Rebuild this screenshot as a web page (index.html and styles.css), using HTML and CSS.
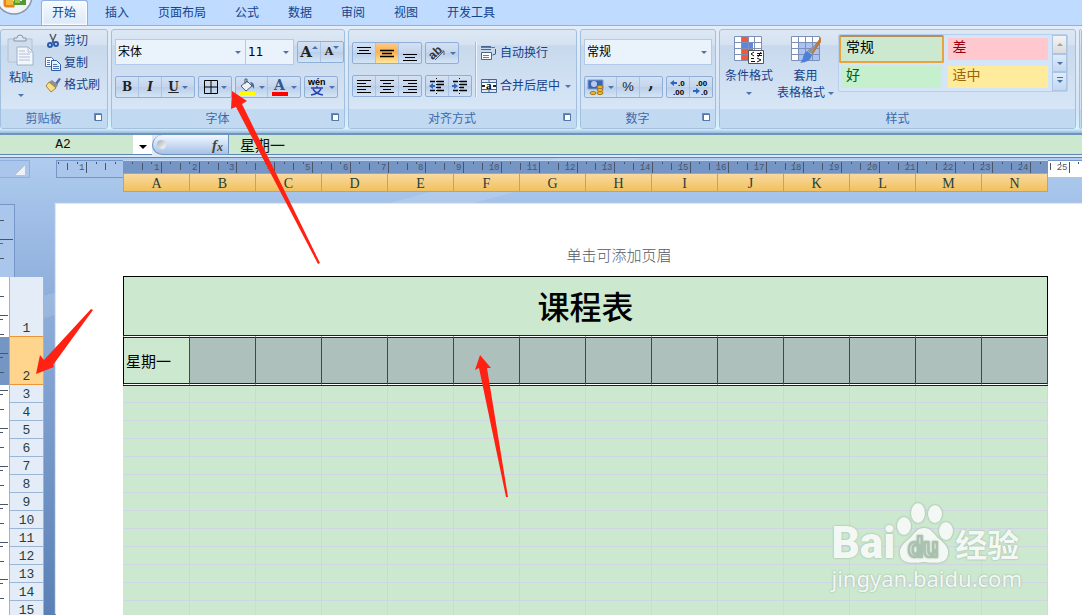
FILE: index.html
```html
<!DOCTYPE html>
<html lang="zh">
<head>
	<meta charset="UTF-8" />
	<title>课程表</title>
	<link rel="stylesheet" href="styles.css">
</head>
<body>

<!-- 选项卡 -->
<nav class="tabs">
	<button class="office" type="button" aria-label="Office">
		<svg width="34" height="16" viewBox="0 0 34 16">
			<circle cx="14" cy="-4" r="18" fill="#f2f4f7" stroke="#8796ab" stroke-width="1.5"/>
			<path d="M5 -2v6q0 2 2 2h6V1" fill="none" stroke="#e8821a" stroke-width="3"/>
			<path d="M6 0h7v5H6z" fill="#f6b73c"/>
			<path d="M16 -2v5h8v-6" fill="none" stroke="#4f9a35" stroke-width="4"/>
			<path d="M15 0h5v3h-5z" fill="#98c83f"/>
		</svg>
	</button>
	<a class="tab active" href="#">开始</a>
	<a class="tab" href="#">插入</a>
	<a class="tab" href="#">页面布局</a>
	<a class="tab" href="#">公式</a>
	<a class="tab" href="#">数据</a>
	<a class="tab" href="#">审阅</a>
	<a class="tab" href="#">视图</a>
	<a class="tab" href="#">开发工具</a>
</nav>

<!-- 功能区 -->
<div class="ribbon">
	<section class="group">
		<div class="group-body clipboard">
			<button class="big paste" type="button">
				<svg width="28" height="32" viewBox="0 0 28 32">
					<path d="M1 5h24v23H1z" fill="#cfdcec" stroke="#b0c2d8"/>
					<path d="M7 7V4h3a3 3 0 0 1 6 0h3v3z" fill="#dfe6ef" stroke="#8496ad"/>
					<path d="M10 13h11l5 5v13H10z" fill="#f3f7fc" stroke="#9db2cc"/>
					<path d="M21 13v5h5M12 17h6M12 20h11M12 23h11M12 26h11" fill="none" stroke="#aec0d8"/>
				</svg>
				<span>粘贴</span>
				<i class="arrow"></i>
			</button>
			<div class="small-list">
				<button type="button">
					<svg width="16" height="16" viewBox="0 0 16 16"><path d="M5 1l4 9M11 1L7 10" stroke="#51606f" stroke-width="1.5"/><circle cx="5" cy="12" r="2" fill="none" stroke="#2a5bb0" stroke-width="2"/><circle cx="11" cy="11" r="2" fill="none" stroke="#2a5bb0" stroke-width="2"/></svg>
					剪切
				</button>
				<button type="button">
					<svg width="16" height="16" viewBox="0 0 16 16"><path d="M.5 2.500h6l3 3v6h-9z" fill="#fff" stroke="#4d76b5"/><path d="M6.500 5.500h5l4 4v6h-9z" fill="#e9f1fc" stroke="#2e5ca6"/><path d="M2 5.500h3M2 7.500h3M2 9.500h3M8 9.500h4M8 11.500h6M8 13.500h6" stroke="#4d76b5"/></svg>
					复制
				</button>
				<button type="button">
					<svg width="16" height="16" viewBox="0 0 16 16"><path d="M10 6l4-5 2 1-4 6z" fill="#5770a8"/><path d="M7 3l6 5-2 3-7-6z" fill="#8a8f98"/><path d="M4 5l7 6-5 4-5-6z" fill="#f8e08a" stroke="#a98331"/></svg>
					格式刷
				</button>
			</div>
		</div>
		<div class="group-title"><span>剪贴板</span><i class="launcher"></i></div>
	</section>

	<section class="group">
		<div class="group-body rows">
			<div class="line">
				<button class="combo font-name" type="button">宋体<i class="arrow"></i></button>
				<button class="combo font-size" type="button">11<i class="arrow"></i></button>
				<div class="btns">
					<button class="serif grow" type="button">A<i class="arrow up"></i></button>
					<button class="serif shrink" type="button">A<i class="arrow"></i></button>
				</div>
			</div>
			<div class="line">
				<div class="btns">
					<button class="serif" type="button">B</button>
					<button class="serif italic" type="button">I</button>
					<button class="serif wide" type="button"><u>U</u><i class="arrow"></i></button>
				</div>
				<div class="btns">
					<button class="wide" type="button">
						<svg width="14" height="14" viewBox="0 0 14 14"><path d="M.5 .5h13v13H.5zM7 0v14M0 7h14" fill="none" stroke="#000"/></svg>
						<i class="arrow"></i>
					</button>
				</div>
				<div class="btns">
					<button class="wide" type="button">
						<svg width="18" height="18" viewBox="0 0 18 18"><path d="M3 8l6-5 5 5-6 5z" fill="#eef2f8" stroke="#4e5d73"/><path d="M7 6V1h2v4" fill="none" stroke="#4e5d73"/><path d="M12 4q5 0 4 7l-2-3z" fill="#3f69a8"/><path d="M1 14h16v4H1z" fill="#ff0"/></svg>
						<i class="arrow"></i>
					</button>
					<button class="wide font-color" type="button"><b>A</b><i class="arrow"></i></button>
				</div>
				<div class="btns">
					<button class="wide" type="button">
						<svg class="pinyin" width="18" height="18" viewBox="0 0 18 18"><text x="0" y="7">wén</text><path d="M3 10h12M9 8v2M5 11q3 5 10 6M13 11q-3 5-10 6" fill="none" stroke="#2a44b5" stroke-width="1.5"/></svg>
						<i class="arrow"></i>
					</button>
				</div>
			</div>
		</div>
		<div class="group-title"><span>字体</span><i class="launcher"></i></div>
	</section>

	<section class="group">
		<div class="group-body align">
			<div class="rows">
				<div class="line">
					<div class="btns">
						<button type="button" aria-label="顶端对齐"><svg width="16" height="18" viewBox="0 0 16 18"><path d="M1 3.500h14M3 6.500h10M1 9.500h14" stroke="#000"/></svg></button>
						<button class="on" type="button" aria-label="垂直居中"><svg width="16" height="18" viewBox="0 0 16 18"><path d="M1 6.500h14M3 9.500h10M1 12.500h14" stroke="#000" stroke-width="1.500"/></svg></button>
						<button type="button" aria-label="底端对齐"><svg width="16" height="18" viewBox="0 0 16 18"><path d="M1 10.500h14M3 13.500h10M1 16.500h14" stroke="#000"/></svg></button>
					</div>
					<div class="btns">
						<button class="wide" type="button">
							<svg class="orient" width="18" height="16" viewBox="0 0 18 16"><text x="0" y="12" transform="rotate(-42 6 9)">ab</text><path d="M6 15l9-9M11 6h4v4" fill="none" stroke="#56606e"/></svg>
							<i class="arrow"></i>
						</button>
					</div>
				</div>
				<div class="line">
					<div class="btns">
						<button type="button" aria-label="左对齐"><svg width="16" height="14" viewBox="0 0 16 14"><path d="M1 1.500h14M1 4.500h9M1 7.500h14M1 10.500h9M1 13.500h14" stroke="#000"/></svg></button>
						<button type="button" aria-label="居中"><svg width="16" height="14" viewBox="0 0 16 14"><path d="M1 1.500h14M4 4.500h8M1 7.500h14M4 10.500h8M1 13.500h14" stroke="#000"/></svg></button>
						<button type="button" aria-label="右对齐"><svg width="16" height="14" viewBox="0 0 16 14"><path d="M1 1.500h14M6 4.500h9M1 7.500h14M6 10.500h9M1 13.500h14" stroke="#000"/></svg></button>
					</div>
					<div class="btns">
						<button type="button" aria-label="减少缩进"><svg width="16" height="16" viewBox="0 0 16 16"><path d="M1 3.500h5M8 3.500h7M8 6.500h7M8 9.500h4M1 12.500h5M8 12.500h7" stroke="#000" stroke-width="1.500"/><path d="M7.500 0v16" stroke="#000" stroke-dasharray="1 2"/><path d="M0 8l4-3v2h2v2H4v2z" fill="#2c66c0"/></svg></button>
						<button type="button" aria-label="增加缩进"><svg width="16" height="16" viewBox="0 0 16 16"><path d="M1 3.500h5M8 3.500h7M8 6.500h7M8 9.500h4M1 12.500h5M8 12.500h7" stroke="#000" stroke-width="1.500"/><path d="M7.500 0v16" stroke="#000" stroke-dasharray="1 2"/><path d="M6 8L2 5v2H0v2h2v2z" fill="#2c66c0"/></svg></button>
					</div>
				</div>
			</div>
			<div class="small-list wrap-list">
				<button type="button">
					<svg width="16" height="16" viewBox="0 0 16 16"><path d="M0 1.500h10M0 4.500h10M.5 8v6.500h10V7.500H.5z" fill="#fff" stroke="#4b668c"/><path d="M0 2.500h14M2 10.500h6M2 12.500h6" stroke="#b0683c"/><path d="M14.500 4v5l-3 1" fill="none" stroke="#3c5a85"/></svg>
					自动换行
				</button>
				<button type="button">
					<svg class="merge" width="16" height="16" viewBox="0 0 16 16"><path d="M.5 1.500h15v13H.5z" fill="#dce8f8" stroke="#486692"/><path d="M0 4.500h16M0 11.500h16M8 1v4M8 11v4" stroke="#486692"/><path d="M1 5h14v6H1z" fill="#fff"/><text x="5" y="11">a</text><path d="M1 8h3M12 8h3" stroke="#222" stroke-width="2"/></svg>
					合并后居中<i class="arrow"></i>
				</button>
			</div>
		</div>
		<div class="group-title"><span>对齐方式</span><i class="launcher"></i></div>
	</section>

	<section class="group">
		<div class="group-body rows">
			<div class="line">
				<button class="combo number-format" type="button">常规<i class="arrow"></i></button>
			</div>
			<div class="line">
				<div class="btns">
					<button class="wide" type="button">
						<svg width="18" height="18" viewBox="0 0 18 18"><path d="M1 2h15v9H1z" fill="#3d64ac" stroke="#7d9bd0"/><circle cx="7" cy="6" r="3" fill="#b7caea"/><g fill="#f4bd2e" stroke="#a3741a"><ellipse cx="13" cy="15" rx="3" ry="1.500"/><ellipse cx="13" cy="12" rx="3" ry="1.500"/><ellipse cx="13" cy="9" rx="3" ry="1.500"/><ellipse cx="6" cy="15" rx="3" ry="1.500"/></g></svg>
						<i class="arrow"></i>
					</button>
					<button class="percent" type="button">%</button>
					<button class="serif comma" type="button">,</button>
				</div>
				<div class="btns push">
					<button type="button"><svg class="decimal" width="18" height="18" viewBox="0 0 18 18"><text x="9" y="8">.0</text><text x="4" y="17">.00</text><path d="M1 5l4-3v2h3v2H5v2z" fill="#2c66c0"/></svg></button>
					<button type="button"><svg class="decimal" width="18" height="18" viewBox="0 0 18 18"><text x="4" y="8">.00</text><text x="9" y="17">.0</text><path d="M8 13l-4-3v2H1v2h3v2z" fill="#2c66c0"/></svg></button>
				</div>
			</div>
		</div>
		<div class="group-title"><span>数字</span><i class="launcher"></i></div>
	</section>

	<section class="group">
		<div class="group-body styles">
			<button class="big" type="button">
				<svg width="32" height="30" viewBox="0 0 32 30">
					<path d="M1.500 2.500h27v24h-27z" fill="#fff"/>
					<path d="M8 2h7v6H8zM8 14h12v6H8zM8 20h7v7H8z" fill="#ef5a3c"/><path d="M8 8h12v6H8z" fill="#5b87e0"/>
					<path d="M1.500 2.500h27v24h-27zM1 8.500h28M1 14.500h28M1 20.500h28M8.500 2v25M15.500 2v25M21.500 2v25" fill="none" stroke="#7d90b8"/>
					<path d="M15.500 16.500h15v13h-15z" fill="#fff" stroke="#555"/>
					<path d="M21 18l-3 2 3 2M18 24.500h3M24 19.500h5M24 21.500h5M28 18l-3 5M18 27.500h4M24 24l4 2-4 2" fill="none" stroke="#111"/>
				</svg>
				<span>条件格式</span>
				<i class="arrow"></i>
			</button>
			<button class="big" type="button">
				<svg width="32" height="30" viewBox="0 0 32 30">
					<path d="M1.500 2.500h28v24h-28z" fill="#fff"/><path d="M8 8h21v19H8z" fill="#a9c4f3"/>
					<path d="M1.500 2.500h28v24h-28zM1 8.500h28M1 14.500h28M1 20.500h28M8.500 2v25M15.500 2v25M22.500 2v25" fill="none" stroke="#7d90b8"/>
					<path d="M31 3v5l-8 12-4-2z" fill="#b77a3c"/><path d="M27 9l-5 10-5-2z" fill="#8e939d"/><path d="M17 17l5 4c-2 6-5 7-12 8 4-3 2-9 7-12z" fill="#4c7fd6"/>
				</svg>
				<span>套用</span>
				<span class="second">表格格式<i class="arrow"></i></span>
			</button>
			<div class="gallery">
				<button class="style-cell normal" type="button">常规</button>
				<button class="style-cell bad" type="button">差</button>
				<button class="style-cell good" type="button">好</button>
				<button class="style-cell neutral" type="button">适中</button>
				<div class="gallery-scroll">
					<button type="button" aria-label="上一行"><i class="arrow up gray"></i></button>
					<button type="button" aria-label="下一行"><i class="arrow"></i></button>
					<button type="button" aria-label="其他"><i class="arrow more"></i></button>
				</div>
			</div>
		</div>
		<div class="group-title"><span>样式</span></div>
	</section>

	<section class="group">
		<div class="group-body"></div>
		<div class="group-title"></div>
	</section>
</div>

<!-- 编辑栏 -->
<div class="formula-bar">
	<input class="name-box" type="text" value="A2" aria-label="名称框">
	<button class="name-drop" type="button" aria-label="名称列表"><i class="arrow black"></i></button>
	<div class="fx"><i class="knob"></i><span>f<sub>x</sub></span></div>
	<input class="formula-input" type="text" value="星期一" aria-label="编辑栏">
</div>

<!-- 工作区 -->
<main class="workspace">
	<div class="top-rulers">
		<div class="corner"></div>
		<svg class="ruler margin-ruler" id="rulerLeft"></svg>
		<div class="columns">
			<svg class="ruler" id="rulerMain"></svg>
			<div class="column-heads" id="columnHeads"></div>
		</div>
		<svg class="ruler right-ruler" id="rulerRight"></svg>
	</div>

	<div class="view">
		<div class="side">
			<svg class="side-margin" width="15" height="73"><path d="M0 15.500h4M0 34.500h13M0 53.500h4" stroke="#4b5568"/><path d="M0 38.500h3" stroke="#59677f"/></svg>
			<div class="side-rows">
				<svg class="side-ruler" id="sideRuler"></svg>
				<div class="row-heads" id="rowHeads"></div>
			</div>
		</div>
		<div class="page">
			<div class="page-header">单击可添加页眉</div>
			<table>
				<colgroup><col class="first-col"><col span="13"></colgroup>
				<tbody id="sheet">
					<tr class="title-row"><td colspan="14">课程表</td></tr>
				</tbody>
			</table>
		</div>
	</div>
</main>

<!-- 水印 -->
<div class="watermark">
	<div class="brand">
		<span class="bai">Bai</span>
		<span class="paw">
			<svg width="60" height="64" viewBox="0 0 60 64">
				<ellipse cx="9" cy="25" rx="7" ry="9"/><ellipse cx="23" cy="12" rx="7" ry="10"/><ellipse cx="40" cy="13" rx="7" ry="9"/><ellipse cx="51" cy="30" rx="7" ry="9"/>
				<path d="M29 27c7 0 9 5 14 10 6 5 11 9 10 16-1 9-10 10-24 8-14 2-23 1-24-8-1-7 4-11 10-16 5-5 7-10 14-10z"/>
				<text x="13" y="56">du</text>
			</svg>
		</span>
		<span class="jingyan">经验</span>
	</div>
	<div class="site">jingyan.baidu.com</div>
</div>

<!-- 标注箭头 -->
<svg class="notes" width="520" height="510" viewBox="0 0 520 510">
	<path d="M232 91L247 101 242 104 320 263 318 264 236 107 231 109z"/>
	<path d="M36 374L40 355 44 360 91 309 93 310 53 365 54 367z"/>
	<path d="M480 355L491 368 487 368 508 497 506 497 479 368 475 370z"/>
</svg>

<script>
	const CM = 37.8;
	const COLS = 'ABCDEFGHIJKLMN';
	const LAST_ROW = 15;

	// 画水平标尺，start 为左端相对零点的像素
	function drawRuler(id, start, width) {
		let out = '';
		for (let q = Math.ceil(start / CM * 4); q * CM / 4 < start + width; q++) {
			const x = Math.round(q * CM / 4 - start) + 0.5;
			const cm = q / 4;
			if (q === 0) continue;
			if (q % 4 === 0) {
				out += `<path d="M${x} 1V12"/><text x="${x - 2}" y="9" text-anchor="end">${Math.abs(cm)}</text>`;
			} else if (q % 2 === 0) {
				out += `<path d="M${x} 2V9"/>`;
			} else {
				out += `<path d="M${x} 1V3"/>`;
			}
		}
		document.getElementById(id).innerHTML = out;
	}

	drawRuler('rulerLeft', -67, 67);
	drawRuler('rulerMain', 0, 925);
	drawRuler('rulerRight', 924, 34);

	document.getElementById('columnHeads').innerHTML =
		[...COLS].map(c => `<div>${c}</div>`).join('');

	// 行号和单元格
	let heads = '<div class="first">1</div><div class="selected">2</div>';
	let rows = '<tr class="selected-row"><td>星期一</td>' + '<td></td>'.repeat(13) + '</tr>';
	for (let r = 3; r <= LAST_ROW; r++) {
		heads += `<div>${r}</div>`;
		rows += '<tr>' + '<td></td>'.repeat(14) + '</tr>';
	}
	document.getElementById('rowHeads').innerHTML = heads;
	document.getElementById('sheet').insertAdjacentHTML('beforeend', rows);

	let side = '';
	for (let i = 1; i < 60; i++) {
		const y = Math.round(i * CM / 2) + 0.5;
		side += i % 2 ? `<path d="M0 ${y}H4"/>` : `<path d="M0 ${y}H8M0 ${y + 4}H3"/>`;
	}
	document.getElementById('sideRuler').innerHTML =
		'<rect y="60" width="9" height="48" fill="#7596c4" stroke="none"/>' + side;
</script>

</body>
</html>
```
FILE: styles.css
```css
* {
	box-sizing: border-box;
}

body {
	margin: 0;
	height: 100vh;
	overflow: hidden;
	position: relative;
	display: flex;
	flex-direction: column;
	font-family: "Liberation Sans", "Noto Sans CJK SC", sans-serif;
	font-size: 12px;
	line-height: 16px;
	color: #15428b;
	background-color: #bfdbff;
}

button {
	font: inherit;
	color: inherit;
	background: none;
	border: none;
	padding: 0;
	cursor: pointer;
}

svg {
	display: block;
	flex: none;
}

/* 下拉小三角 */
.arrow {
	display: inline-block;
	flex: none;
	border: 3px solid transparent;
	border-top-color: #4a74ab;
	border-bottom: none;
}

.arrow.up {
	border-top: none;
	border-bottom: 3px solid #4a74ab;
}

.arrow.gray {
	border-bottom-color: #a0a0a0;
}

.arrow.black {
	border-width: 4px;
	border-bottom: none;
	border-top-color: #000;
}

.arrow.more {
	position: relative;
}

.arrow.more::before {
	content: "";
	position: absolute;
	left: -3px;
	top: -6px;
	width: 6px;
	height: 1px;
	background-color: #4a74ab;
}

/* 选项卡 */
.tabs {
	display: flex;
	height: 25px;
	flex: none;
}

.office {
	width: 41px;
	display: flex;
	align-items: flex-start;
}

.tab {
	height: 25px;
	padding: 0 12px;
	margin-right: 5px;
	line-height: 27px;
	color: #15428b;
	text-decoration: none;
}

.tab.active {
	padding: 0 11px 0 10px;
	border: 1px solid #8db2e3;
	border-bottom: none;
	border-radius: 3px 3px 0 0;
	line-height: 25px;
	background-image: linear-gradient(#f6faff, #dbe8f7);
	box-shadow: inset 0 0 2px 1px #fff;
}

/* 功能区 */
.ribbon {
	flex: none;
	height: 109px;
	padding: 3px 0 4px;
	display: grid;
	grid-template-columns: 108px 234px 229px 136px 357px 1fr;
	gap: 3px;
	border-top: 1px solid #8db2e3;
	border-bottom: 1px solid #6b95bf;
	background-image: linear-gradient(#e3edf9, #d5e5f7 80%, #d2f4ff 96%, #9fb8d8);
}

.group {
	display: flex;
	flex-direction: column;
	min-width: 0;
	overflow: hidden;
	border: 1px solid #a2bfde;
	border-radius: 3px;
	background-image: linear-gradient(#dde8f5, #d6e2f1 15%, #c8d9ed 16%, #d7e6f6 80%);
}

.group-body {
	flex: 1;
	padding: 9px 3px 11px;
}

.group-title {
	height: 19px;
	display: flex;
	align-items: center;
	color: #3e6aaa;
	background-color: #c1d9f1;
}

.group-title span {
	flex: 1;
	text-align: center;
}

.launcher {
	position: relative;
	margin: 0 5px 4px 8px;
	width: 8px;
	height: 8px;
	border: 1px solid #6b8cb9;
	border-right-color: transparent;
	border-bottom-color: transparent;
}

.launcher::after {
	content: "";
	position: absolute;
	right: -1px;
	bottom: -1px;
	width: 5px;
	height: 5px;
	border: 1px solid #5177ab;
	background-color: #fff;
}

.rows {
	display: flex;
	flex-direction: column;
	justify-content: space-between;
}

.line {
	display: flex;
	align-items: center;
	gap: 3px;
}

.push {
	margin-left: auto;
}

.combo {
	height: 26px;
	padding: 0 4px 0 2px;
	display: flex;
	align-items: center;
	justify-content: space-between;
	color: #000;
	border: 1px solid #b3cbe8;
	background-color: #eaf2fb;
}

.font-name {
	flex: none;
	width: 131px;
	margin-right: -3px;
}

.font-size {
	flex: none;
	width: 48px;
	font-family: "DejaVu Sans", sans-serif;
	border-left: none;
}

.number-format {
	flex: 1;
}

.btns {
	display: flex;
	height: 22px;
	border: 1px solid #8fafd9;
	border-radius: 2px;
	background-image: linear-gradient(#d3e1f3, #c4d5ed 50%, #bacee8 51%, #d3e4f6);
}

.btns button {
	width: 23px;
	display: flex;
	align-items: center;
	justify-content: center;
	gap: 3px;
	color: #222;
	border-right: 1px solid #abc3e2;
}

.btns button:last-child {
	width: 22px;
	border-right: none;
}

.btns .wide,
.btns .wide:last-child {
	width: 32px;
}

.btns .on {
	background-image: linear-gradient(#fbc98c, #fdb14b 45%, #fee79c);
}

.serif {
	font-family: "DejaVu Serif", "Liberation Serif", serif;
	font-weight: bold;
}

.btns .grow,
.btns .shrink {
	gap: 0;
	align-items: flex-start;
	font-size: 15px;
	line-height: 20px;
}

.btns .shrink {
	font-size: 11px;
}

.grow .arrow,
.shrink .arrow {
	margin-top: 4px;
}

.italic {
	font-style: italic;
}

.font-color b {
	width: 16px;
	height: 18px;
	border-bottom: 4px solid #f00;
	font-family: "DejaVu Serif", serif;
	font-size: 14px;
	line-height: 14px;
	color: #35578f;
}

.pinyin text {
	font-family: "Liberation Sans", sans-serif;
	font-size: 9px;
	font-weight: bold;
}

.orient {
	overflow: visible;
}

.orient text {
	font-family: "Liberation Sans", sans-serif;
	font-size: 12px;
	font-weight: bold;
	fill: #333;
}

.merge text {
	font-family: "Liberation Serif", serif;
	font-size: 11px;
	font-weight: bold;
}

.percent {
	font-size: 13px;
}

.comma {
	font-size: 16px;
}

.btns .comma {
	padding-bottom: 6px;
}

.decimal {
	overflow: visible;
}

.decimal text {
	font-family: "Liberation Sans", sans-serif;
	font-size: 8px;
	font-weight: bold;
}

/* 剪贴板 */
.clipboard {
	display: flex;
	padding: 0 3px 0 7px;
}

.big {
	display: flex;
	flex-direction: column;
	align-items: center;
}

.big span {
	display: flex;
	align-items: center;
	gap: 3px;
	margin-top: 4px;
	line-height: 17px;
	white-space: nowrap;
}

.big .second {
	margin-top: 0;
}

.big > .arrow {
	margin-top: 7px;
}

.paste {
	width: 26px;
	padding-top: 4px;
}

.clipboard .small-list {
	margin-left: 11px;
}

.small-list {
	display: flex;
	flex-direction: column;
}

.small-list button {
	height: 22px;
	display: flex;
	align-items: center;
	gap: 3px;
	white-space: nowrap;
}

/* 对齐方式 */
.align {
	display: flex;
	padding: 12px 3px;
}

.wrap-list {
	margin-left: 3px;
	padding-left: 5px;
	justify-content: space-between;
	border-left: 1px solid #9db9dc;
	box-shadow: inset 1px 0 #f0f6fd;
}

.wrap-list .arrow {
	margin-left: 2px;
}

/* 样式 */
.styles {
	display: flex;
	padding: 4px 7px 0 5px;
	gap: 4px;
	align-items: flex-start;
}

.gallery {
	flex: 1;
	display: grid;
	grid-template-columns: 1fr 1fr 15px;
	grid-template-rows: 28px 28px;
	column-gap: 2px;
	border: 1px solid #b5cfec;
	border-radius: 2px;
	background-color: #d4e5f8;
}

.style-cell {
	margin: 3px 2px;
	padding: 0 0 4px 5px;
	text-align: left;
	font-size: 14px;
	line-height: 18px;
}

.normal {
	margin: 0;
	color: #000;
	border: 2px solid #e8a33d;
	border-top-color: #b68d5c;
	border-radius: 2px;
	background-color: #cce8cf;
}

.bad {
	color: #9c0006;
	background-color: #ffc7ce;
}

.good {
	color: #006100;
	background-color: #c6efce;
}

.neutral {
	color: #9c6500;
	background-color: #ffeb9c;
}

.gallery-scroll {
	grid-column: 3;
	grid-row: 1 / 3;
	display: flex;
	flex-direction: column;
}

.gallery-scroll button {
	flex: 1;
	display: flex;
	align-items: center;
	justify-content: center;
	border: 1px solid #a9c4e4;
	background-image: linear-gradient(#deebfa, #c3d8f0);
}

.gallery-scroll button:first-child {
	background-image: linear-gradient(#f4f4f4, #dcdcdc);
}

/* 编辑栏 */
.formula-bar {
	flex: none;
	display: flex;
	height: 24px;
	border-top: 1px solid #6b95bf;
	border-bottom: 1px solid #5b86b8;
	background-color: #dfeaf8;
}

.formula-bar input,
.name-drop {
	height: 20px;
	border: none;
	border-bottom: 1px solid #5b86b8;
	outline: none;
	color: #111;
	background-color: #cce8cf;
}

.name-box {
	width: 133px;
	padding: 0 7px 0 0;
	text-align: center;
	font-family: "Liberation Mono", monospace;
	font-size: 13px;
}

.formula-bar .name-drop {
	width: 19px;
	background-color: #fff;
}

.fx {
	width: 77px;
	height: 20px;
	padding: 0 5px 0 4px;
	display: flex;
	align-items: center;
	justify-content: space-between;
	border: 1px solid #6b95bf;
	border-top: none;
	border-radius: 10px 0 0 10px;
	background-image: linear-gradient(#f3f8ff, #a6c1e6);
	font-family: "Liberation Serif", serif;
	font-size: 15px;
	font-style: italic;
	font-weight: bold;
	color: #444;
}

.fx sub {
	font-size: 12px;
	line-height: 8px;
	vertical-align: -1px;
}

.knob {
	width: 9px;
	height: 9px;
	border-radius: 50%;
	background-image: linear-gradient(135deg, #a3abb8, #fff);
}

.formula-bar .formula-input {
	flex: 1;
	min-width: 0;
	padding: 0 0 0 11px;
	font-family: "Noto Sans CJK SC", sans-serif;
	font-size: 15px;
}

/* 工作区 */
.workspace {
	flex: 1;
	min-height: 0;
	padding-top: 2px;
	display: flex;
	flex-direction: column;
	overflow: hidden;
	background-image: linear-gradient(165deg, transparent 0 20%, rgba(255, 255, 255, .12) 20% 23%, transparent 23%), linear-gradient(#b0ccee, #a1bfe7 12%, #91b0dc 28%, #5a80b5);
}

.top-rulers {
	flex: none;
	display: flex;
	height: 44px;
}

.corner {
	width: 30px;
	height: 18px;
	margin-right: 26px;
	border: 1px solid #8fb0dc;
	border-left: none;
	background-color: #aac6ea;
	background-image: linear-gradient(135deg, transparent 50%, #eef0f3 50%);
	background-size: 10px 10px;
	background-position: 15px 4px;
	background-repeat: no-repeat;
}

.ruler path,
.side-ruler path {
	stroke: #4b5568;
}

.ruler text {
	font-family: "Liberation Mono", monospace;
	font-size: 9px;
	fill: #4b5568;
}

.margin-ruler {
	width: 67px;
	height: 18px;
	border: 1px solid #7596c8;
	border-right: none;
	background-color: #aac6ea;
}

.columns {
	width: 925px;
	flex: none;
}

.columns .ruler {
	width: 100%;
	height: 13px;
	border-top: 1px solid #c0d6f2;
	background-color: #7596c4;
}

.right-ruler {
	flex: 1;
	min-width: 0;
	height: 17px;
	border-top: 1px solid #7596c8;
	background-color: #fff;
}

.column-heads {
	display: flex;
	height: 19px;
	border: 1px solid #ee9637;
	background-image: linear-gradient(#f9d99f, #f1c15f);
}

.column-heads div {
	flex: none;
	width: 66px;
	border-right: 1px solid #ee9637;
	text-align: center;
	font-family: "Liberation Serif", serif;
	font-size: 14px;
	line-height: 20px;
	color: #24403c;
}

.column-heads div:last-child {
	flex: 1;
	border-right: none;
}

.view {
	flex: 1;
	min-height: 0;
	display: flex;
	align-items: stretch;
}

.side {
	flex: none;
	width: 44px;
	margin-right: 12px;
}

.side-margin {
	border: 1px solid #7596c8;
	border-left: none;
	border-bottom: none;
	background-color: #aac6ea;
}

.side-rows {
	display: flex;
}

.side-ruler {
	width: 9px;
	height: 1200px;
	background-color: #fff;
}

.row-heads {
	flex: 1;
	border-left: 1px solid #9bb5d4;
	border-right: 1px solid #9bb5d4;
}

.row-heads div {
	height: 18px;
	border-bottom: 1px solid #9bb5d4;
	text-align: center;
	font-family: "Liberation Mono", monospace;
	font-size: 13px;
	line-height: 20px;
	color: #24403c;
	background-color: #e4ecf7;
}

.row-heads .first {
	height: 60px;
	padding-top: 42px;
	border-bottom-color: #ee9637;
}

.row-heads .selected {
	height: 48px;
	padding-top: 30px;
	border-bottom-color: #ee9637;
	background-color: #ffd58d;
}

/* 页面 */
.page {
	flex: 0 0 1126px;
	padding: 42px 67px 0;
	background-color: #fff;
	box-shadow: -1px -1px 1px #dfe6f2;
}

.page-header {
	padding-bottom: 12px;
	text-align: center;
	font-family: "Noto Sans CJK SC", sans-serif;
	font-size: 15px;
	line-height: 18px;
	font-weight: 300;
	color: #555a68;
}

table {
	width: 925px;
	table-layout: fixed;
	border-collapse: separate;
	border-spacing: 0;
	background-color: #fff;
}

col {
	width: 66px;
}

.first-col {
	width: 67px;
}

td {
	height: 18px;
	padding: 0;
	border-right: 1px solid #d0d5e6;
	border-bottom: 1px solid #d0d5e6;
	background-color: #cce8cf;
}

.title-row td {
	height: 59px;
	padding-top: 3px;
	border: 1px solid #000;
	border-bottom: none;
	text-align: center;
	font-family: "Liberation Serif", "Noto Sans CJK SC", serif;
	font-size: 32px;
	line-height: 40px;
	font-weight: 500;
	color: #000;
}

.selected-row td {
	height: 51px;
	border: 3px double #2a1a2a;
	border-left: none;
	border-right: 1px solid #3c4a48;
	background-color: #aec0bb;
	background-clip: padding-box;
}

.selected-row td:first-child {
	padding-left: 2px;
	border-left: 1px solid #000;
	font-family: "Noto Sans CJK SC", sans-serif;
	font-size: 15px;
	color: #000;
	background-color: #cce8cf;
}

.selected-row + tr td {
	height: 17px;
}

/* 水印 */
.watermark {
	position: absolute;
	right: 60px;
	bottom: 24px;
	color: #f3f8f4;
	text-shadow: 0 0 2px #8fa896;
}

.brand {
	display: flex;
	align-items: flex-end;
	height: 64px;
}

.bai {
	font-family: Roboto, sans-serif;
	font-size: 44px;
	line-height: 44px;
	font-weight: 900;
}

.paw svg {
	fill: #f3f8f4;
	filter: drop-shadow(0 0 1px #8fa896);
}

.paw text {
	font-family: Roboto, sans-serif;
	font-size: 27px;
	font-weight: bold;
	stroke: #a9c2ae;
	stroke-width: 2px;
}

.jingyan {
	font-size: 32px;
	line-height: 38px;
	font-weight: bold;
}

.site {
	font-family: "Noto Sans", sans-serif;
	font-size: 22px;
	line-height: 26px;
}

/* 标注箭头 */
.notes {
	position: absolute;
	left: 0;
	top: 0;
	pointer-events: none;
	fill: #ff2213;
}
```
